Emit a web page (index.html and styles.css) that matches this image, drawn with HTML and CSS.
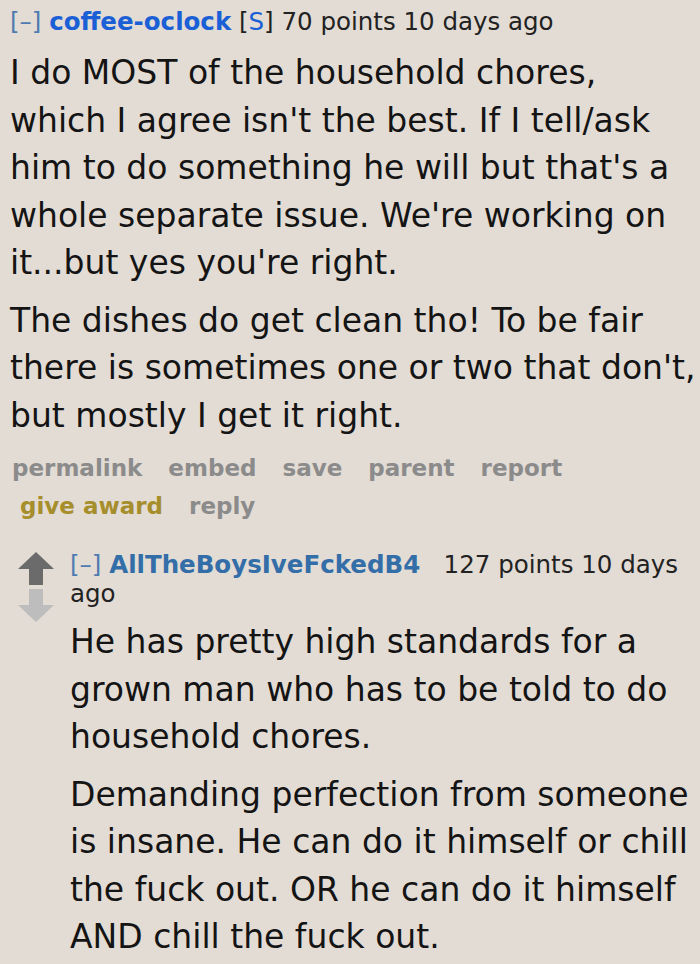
FILE: index.html
```html
<!DOCTYPE html>
<html>
<head>
<meta charset="utf-8">
<link rel="stylesheet" href="styles.css">
</head>
<body>
<div class="comment">
  <p class="tagline"><span class="expand">[–]</span> <a class="author submitter">coffee-oclock</a> <span class="flair">[<span class="s">S</span>]</span> <span class="score">70 points</span> 10 days ago</p>
  <div class="md">
    <p>I do MOST of the household chores, which I agree isn't the best. If I tell/ask him to do something he will but that's a whole separate issue. We're working on it...but yes you're right.</p>
    <p>The dishes do get clean tho! To be fair there is sometimes one or two that don't, but mostly I get it right.</p>
  </div>
  <ul class="buttons">
    <li>permalink</li> <li>embed</li> <li>save</li> <li>parent</li> <li>report</li> <li class="award">give award</li> <li>reply</li>
  </ul>
  <div class="child">
    <div class="arrows">
      <svg class="arrow" width="36" height="33" viewBox="0 0 36 33"><path d="M18 0 L36 17 L25 17 L25 33 L11 33 L11 17 L0 17 Z" fill="#6b6b6b"/></svg>
      <svg class="arrow down" width="36" height="33" viewBox="0 0 36 33"><path d="M18 33 L36 16 L25 16 L25 0 L11 0 L11 16 L0 16 Z" fill="#bdbdbd"/></svg>
    </div>
    <div class="entry">
      <p class="tagline t2"><span class="expand">[–]</span> <a class="author">AllTheBoysIveFckedB4</a>&nbsp;&nbsp; <span class="score">127 points</span> <span class="time">10 days</span> <span class="time">ago</span></p>
      <div class="md">
        <p>He has pretty high standards for a grown man who has to be told to do household chores.</p>
        <p>Demanding perfection from someone is insane. He can do it himself or chill the fuck out. OR he can do it himself AND chill the fuck out.</p>
      </div>
    </div>
  </div>
</div>
</body>
</html>
```
FILE: styles.css
```css
html, body {
  margin: 0;
  padding: 0;
  background: #e3dcd5;
}
body {
  font-family: "DejaVu Sans", Verdana, sans-serif;
  color: #111;
  overflow: hidden;
}
.comment {
  padding: 4px 0 0 10px;
}
.tagline {
  margin: 0;
  font-size: 24.5px;
  line-height: 36px;
  color: #222;
}
.expand {
  color: #4f7bb0;
}
.author {
  font-weight: bold;
  color: #1a5fd6;
  text-decoration: none;
}
.flair {
  color: #222;
}
.flair .s {
  color: #1a5fd6;
}
.md {
  font-size: 33px;
  line-height: 47.5px;
  color: #141414;
  margin-top: 9px;
}
.md p {
  margin: 0 0 10px 0;
}
.buttons {
  list-style: none;
  margin: 2px 0 0 0;
  padding: 0 0 0 2px;
  font-size: 23px;
  font-weight: bold;
  line-height: 38px;
  color: #8b8b8b;
  width: 620px;
}
.buttons li {
  display: inline;
  white-space: nowrap;
  margin-right: 18px;
}
.buttons .award {
  color: #a68e2c;
  margin-left: 8px;
}
.child {
  display: flex;
  margin-top: 25px;
}
.arrows {
  width: 60px;
  flex: none;
  display: flex;
  flex-direction: column;
  align-items: flex-start;
  padding-left: 8px;
  padding-top: 2px;
  box-sizing: border-box;
}
.arrow {
  display: block;
}
.arrow.down {
  margin-top: 4px;
}
.entry {
  flex: 1;
}
.t2 {
  line-height: 29px;
}
.t2 .author {
  color: #336ea8;
}
.entry .md {
  margin-top: 10px;
}
```
